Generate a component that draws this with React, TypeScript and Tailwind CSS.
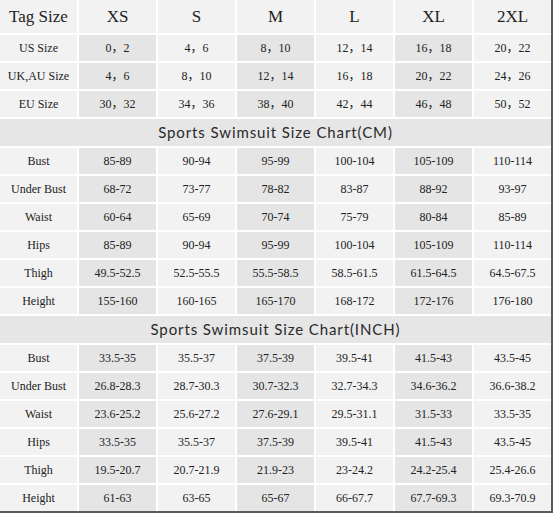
import React from 'react';

const sizes = ['XS', 'S', 'M', 'L', 'XL', '2XL'];

const conversion: [string, string[]][] = [
  ['US Size', ['0，2', '4，6', '8，10', '12，14', '16，18', '20，22']],
  ['UK,AU Size', ['4，6', '8，10', '12，14', '16，18', '20，22', '24，26']],
  ['EU Size', ['30，32', '34，36', '38，40', '42，44', '46，48', '50，52']],
];

const cm: [string, string[]][] = [
  ['Bust', ['85-89', '90-94', '95-99', '100-104', '105-109', '110-114']],
  ['Under Bust', ['68-72', '73-77', '78-82', '83-87', '88-92', '93-97']],
  ['Waist', ['60-64', '65-69', '70-74', '75-79', '80-84', '85-89']],
  ['Hips', ['85-89', '90-94', '95-99', '100-104', '105-109', '110-114']],
  ['Thigh', ['49.5-52.5', '52.5-55.5', '55.5-58.5', '58.5-61.5', '61.5-64.5', '64.5-67.5']],
  ['Height', ['155-160', '160-165', '165-170', '168-172', '172-176', '176-180']],
];

const inch: [string, string[]][] = [
  ['Bust', ['33.5-35', '35.5-37', '37.5-39', '39.5-41', '41.5-43', '43.5-45']],
  ['Under Bust', ['26.8-28.3', '28.7-30.3', '30.7-32.3', '32.7-34.3', '34.6-36.2', '36.6-38.2']],
  ['Waist', ['23.6-25.2', '25.6-27.2', '27.6-29.1', '29.5-31.1', '31.5-33', '33.5-35']],
  ['Hips', ['33.5-35', '35.5-37', '37.5-39', '39.5-41', '41.5-43', '43.5-45']],
  ['Thigh', ['19.5-20.7', '20.7-21.9', '21.9-23', '23-24.2', '24.2-25.4', '25.4-26.6']],
  ['Height', ['61-63', '63-65', '65-67', '66-67.7', '67.7-69.3', '69.3-70.9']],
];

const serif = "font-['Liberation_Serif','Noto_Sans_CJK_SC',serif]";

function DataRows({ rows }: { rows: [string, string[]][] }) {
  return (
    <>
      {rows.map(([label, values]) => (
        <React.Fragment key={label}>
          <div className={`h-[26px] flex items-center justify-center bg-[#f2f2f2] text-[12px] ${serif}`}>{label}</div>
          {values.map((v, i) => (
            <div
              key={i}
              className={`h-[26px] flex items-center justify-center text-[12px] ${serif} ${
                i % 2 === 0 ? 'bg-[#e5e5e5]' : 'bg-[#f2f2f2]'
              }`}
            >
              {v}
            </div>
          ))}
        </React.Fragment>
      ))}
    </>
  );
}

function SectionTitle({ title }: { title: string }) {
  return (
    <div className="col-span-7 h-[27px] flex items-center justify-center bg-[#e6e6e6] text-[15px] tracking-[0.9px] text-[#2a2a2a] font-['Lato','DejaVu_Sans',sans-serif]">
      {title}
    </div>
  );
}

export default function App() {
  return (
    <div className="w-[553px] h-[514px] bg-white">
      <div className="w-[553px] grid grid-cols-7 gap-[2px] bg-white border-r-2 border-b-2 border-[#5a5a5a] text-[#222]">
        <div className={`h-[33px] flex items-center justify-center bg-[#f2f2f2] text-[17px] ${serif}`}>Tag Size</div>
        {sizes.map((s) => (
          <div key={s} className={`h-[33px] flex items-center justify-center bg-[#f2f2f2] text-[17px] ${serif}`}>
            {s}
          </div>
        ))}
        <DataRows rows={conversion} />
        <SectionTitle title="Sports Swimsuit Size Chart(CM)" />
        <DataRows rows={cm} />
        <SectionTitle title="Sports Swimsuit Size Chart(INCH)" />
        <DataRows rows={inch} />
      </div>
    </div>
  );
}
